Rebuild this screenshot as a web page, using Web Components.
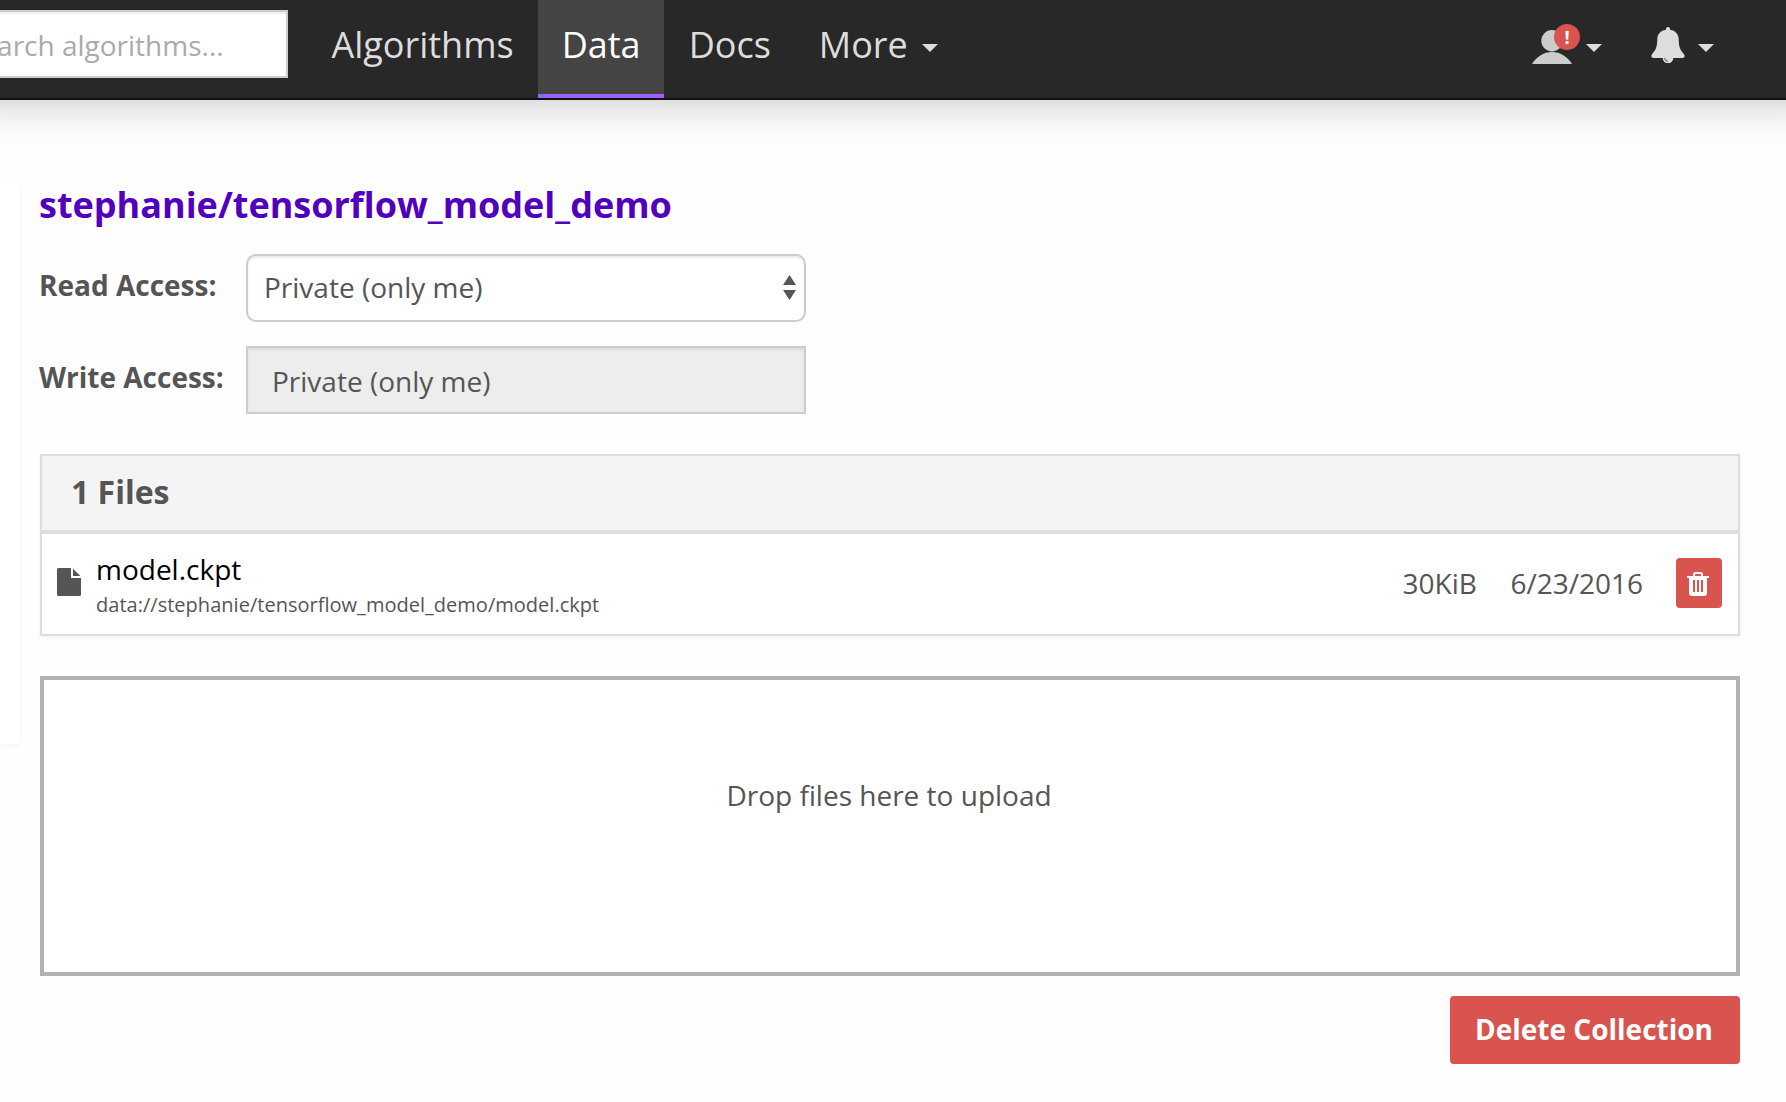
<!DOCTYPE html>
<html lang="en">
<head>
<meta charset="utf-8">
<title>Data collection</title>
<style>
html,body{margin:0;height:100%}
body{background:#fefefe;font-family:"Open Sans",sans-serif;font-size:28px;color:#555;overflow:hidden}
</style>
</head>
<body>
<data-app></data-app>
<script>
function define(name, html){
  const t=document.createElement('template');
  t.innerHTML=html;
  customElements.define(name,class extends HTMLElement{
    constructor(){super();this.attachShadow({mode:'open'}).append(t.content.cloneNode(true));}
  });
}
define('caret-down',`<style>:host{display:block;width:16px;height:8px}svg{display:block}</style>
<svg width="16" height="8" viewBox="0 0 16 8"><path d="M0 0h16L8 8z" fill="#ddd"/></svg>`);
define('search-box',`<style>
:host{display:block;box-sizing:border-box;width:348px;height:68px;margin:10px 0 0 -60px;border:2px solid #ccc;background:#fff;box-shadow:inset 0 2px 2px rgba(0,0,0,.075);padding-left:24px;line-height:66px;color:#aaa;white-space:nowrap;flex:none}
</style><slot></slot>`);
define('nav-link',`<style>
:host{display:block;box-sizing:border-box;height:98px;padding:0 24px;font-size:36px;line-height:89px;color:#ddd;white-space:nowrap;flex:none}
:host([active]){background:#444;color:#fff;border-bottom:4px solid #9b60ff;width:126px}
</style><slot></slot>`);
define('user-menu',`<style>
:host{display:flex;align-items:flex-start}
.pic{position:relative;width:40px;height:34px;margin-top:30px}
.pic svg{display:block}
.badge{position:absolute;left:22px;top:-6px;width:26px;height:26px;border-radius:50%;background:#d9534f;color:#fff;font-weight:700;font-size:18px;line-height:26px;text-align:center}
caret-down{margin:44px 0 0 14px}
</style>
<div class="pic"><svg width="40" height="34" viewBox="0 0 40 34"><g fill="#ccc"><circle cx="20" cy="10.7" r="10.7"/><path d="M0 34C4.500 26.500 12 22 20 22s15.500 4.500 20 12z"/></g></svg><span class="badge">!</span></div>
<caret-down></caret-down>`);
define('alert-menu',`<style>
:host{display:flex;align-items:flex-start;margin-left:49px}
svg{display:block;margin-top:27px}
caret-down{margin:44px 0 0 13px}
</style>
<svg width="34" height="36" viewBox="0 0 34 36"><path fill="#ddd" d="M17 0c1.200 0 2 .8 2 1.800v1C24.500 3.600 27.600 7.300 27.700 12c.1 8 1.200 10.500 5.300 15.300 1.300 1.600.6 3.700-1.200 3.700H22.300a5.300 5.300 0 0 1-10.600 0H2.200C.4 31-.3 28.900 1 27.300 5.100 22.500 6.200 20 6.300 12 6.400 7.300 9.500 3.600 15 2.800v-1C15 .8 15.800 0 17 0z"/><path d="M13.600 31q.4 3 3.400 3.400" fill="none" stroke="#282828" stroke-width=".8"/></svg>
<caret-down></caret-down>`);
define('top-bar',`<style>
:host{display:flex;align-items:flex-start;box-sizing:border-box;height:100px;background:#282828;border-bottom:2px solid #111;box-shadow:0 -36px 40px 40px rgba(0,0,0,.21)}
.links{display:flex;margin-left:19.400px}
nav-link[active]+nav-link{padding-left:25px}
caret-down{margin:44px 0 0 -10px}
.right{display:flex;margin-left:auto;margin-right:72px}
</style>
<search-box>Search algorithms...</search-box>
<div class="links"><nav-link>Algorithms</nav-link><nav-link active>Data</nav-link><nav-link>Docs</nav-link><nav-link>More</nav-link><caret-down></caret-down></div>
<div class="right"><user-menu></user-menu><alert-menu></alert-menu></div>`);
define('access-row',`<style>
:host{display:flex;height:68px}
.label{width:207px;margin-left:-1px;font-weight:700;line-height:62px;white-space:nowrap}
.field{box-sizing:border-box;width:560px;height:68px;border:2px solid #ccc;display:flex;align-items:center;justify-content:space-between;box-shadow:inset 0 2px 2px rgba(0,0,0,.075);padding:0 8px 0 16px;border-radius:10px;background:#fff;line-height:40px}
.field span{margin-top:-2px}
.field svg{margin-top:-1px}
:host([locked]) .field{background:#ededed;border-radius:0;padding:3px 0 0 24px}
:host([locked]) svg{display:none}
</style>
<div class="label"><slot name="label"></slot></div>
<div class="field"><span><slot></slot></span><svg width="13" height="25" viewBox="0 0 13 25"><path fill="#555" d="M0 10 6.500 0 13 10zM0 15h13L6.500 25z"/></svg></div>`);
define('trash-button',`<style>
:host{display:flex;box-sizing:border-box;width:46px;height:50px;border-radius:4px;background:#d9534f;padding:14px 0 0 11px}
svg{display:block}
</style>
<svg width="22" height="24" viewBox="0 0 22 24"><path fill="#fff" fill-rule="evenodd" d="M0 4h6V2.500Q6 0 8.500 0h5Q16 0 16 2.500V4h6v2h-2v15q0 3-3 3H5q-3 0-3-3V6H0zM8 4h6V3q0-1-1-1H9Q8 2 8 3zM6 8v12h2V8zM10 8v12h2V8zM14 8v12h2V8z"/></svg>`);
define('file-row',`<style>
:host{display:flex;box-sizing:border-box;height:100px;padding:0 16px 0 15px}
.ic{display:block;margin-top:34px}
.name{margin-left:15px;padding-top:16px;flex:1}
.name div{color:#000;line-height:38px}
.name small{display:block;margin-top:3px;font-size:20px;line-height:28px;letter-spacing:.02px}
.num{line-height:98px;white-space:nowrap}
.size{width:108px}.date{width:165.500px}
trash-button{margin-top:24px}
</style>
<svg class="ic" width="24" height="28" viewBox="0 0 24 28"><path fill="#555" d="M1.500 0H14v10h10v16.500q0 1.500-1.500 1.500h-21Q0 28 0 26.500v-25Q0 0 1.500 0zM16 .7 23.300 8H16z"/></svg>
<div class="name"><div><slot name="name"></slot></div><small><slot name="path"></slot></small></div>
<div class="num size"><slot name="size"></slot></div><div class="num date"><slot name="date"></slot></div>
<trash-button></trash-button>`);
define('file-panel',`<style>
:host{display:block;box-sizing:border-box;height:182px;border:2px solid #ddd;background:#fff;box-shadow:0 2px 4px rgba(0,0,0,.05)}
header{box-sizing:border-box;height:78px;background:#f4f4f4;border-bottom:4px solid #ddd;padding-left:29px;font-size:32px;font-weight:700;line-height:71px}
</style><header><slot name="title"></slot></header><slot></slot>`);
define('drop-zone',`<style>
:host{display:block;box-sizing:border-box;height:300px;border:4px solid #b2b2b2;background:#fff;text-align:center;padding:95px 2px 0 0;line-height:40px}
</style><slot></slot>`);
define('danger-button',`<style>
:host{display:block;box-sizing:border-box;width:290px;height:68px;padding-right:2px;border-radius:4px;background:#d9534f;color:#fff;font-weight:700;text-align:center;line-height:67px;white-space:nowrap}
</style><slot></slot>`);
define('side-card',`<style>
:host{display:block;width:20px;height:564px;margin-top:80px;background:#fff;box-shadow:0 2px 4px rgba(0,0,0,.04)}
</style>`);
define('collection-page',`<style>
:host{display:block;width:1700px;margin-left:20px}
h1{margin:80px 0 0 -1px;font-size:36px;font-weight:700;line-height:50px;color:#5000be;height:74px}
access-row{margin-bottom:24px}
file-panel{margin-top:40px}
drop-zone{margin-top:40px}
danger-button{margin:20px 0 0 auto}
</style>
<h1>stephanie/tensorflow_model_demo</h1>
<access-row><span slot="label">Read Access:</span>Private (only me)</access-row>
<access-row locked><span slot="label">Write Access:</span>Private (only me)</access-row>
<file-panel><span slot="title">1 Files</span>
<file-row><span slot="name">model.ckpt</span><span slot="path">data://stephanie/tensorflow_model_demo/model.ckpt</span><span slot="size">30KiB</span><span slot="date">6/23/2016</span></file-row></file-panel>
<drop-zone>Drop files here to upload</drop-zone>
<danger-button>Delete Collection</danger-button>`);
define('data-app',`<style>
:host{display:flex;flex-direction:column}
main{display:flex;align-items:flex-start}
top-bar{position:relative}
</style><top-bar></top-bar><main><side-card></side-card><collection-page></collection-page></main>`);
</script>
</body>
</html>
